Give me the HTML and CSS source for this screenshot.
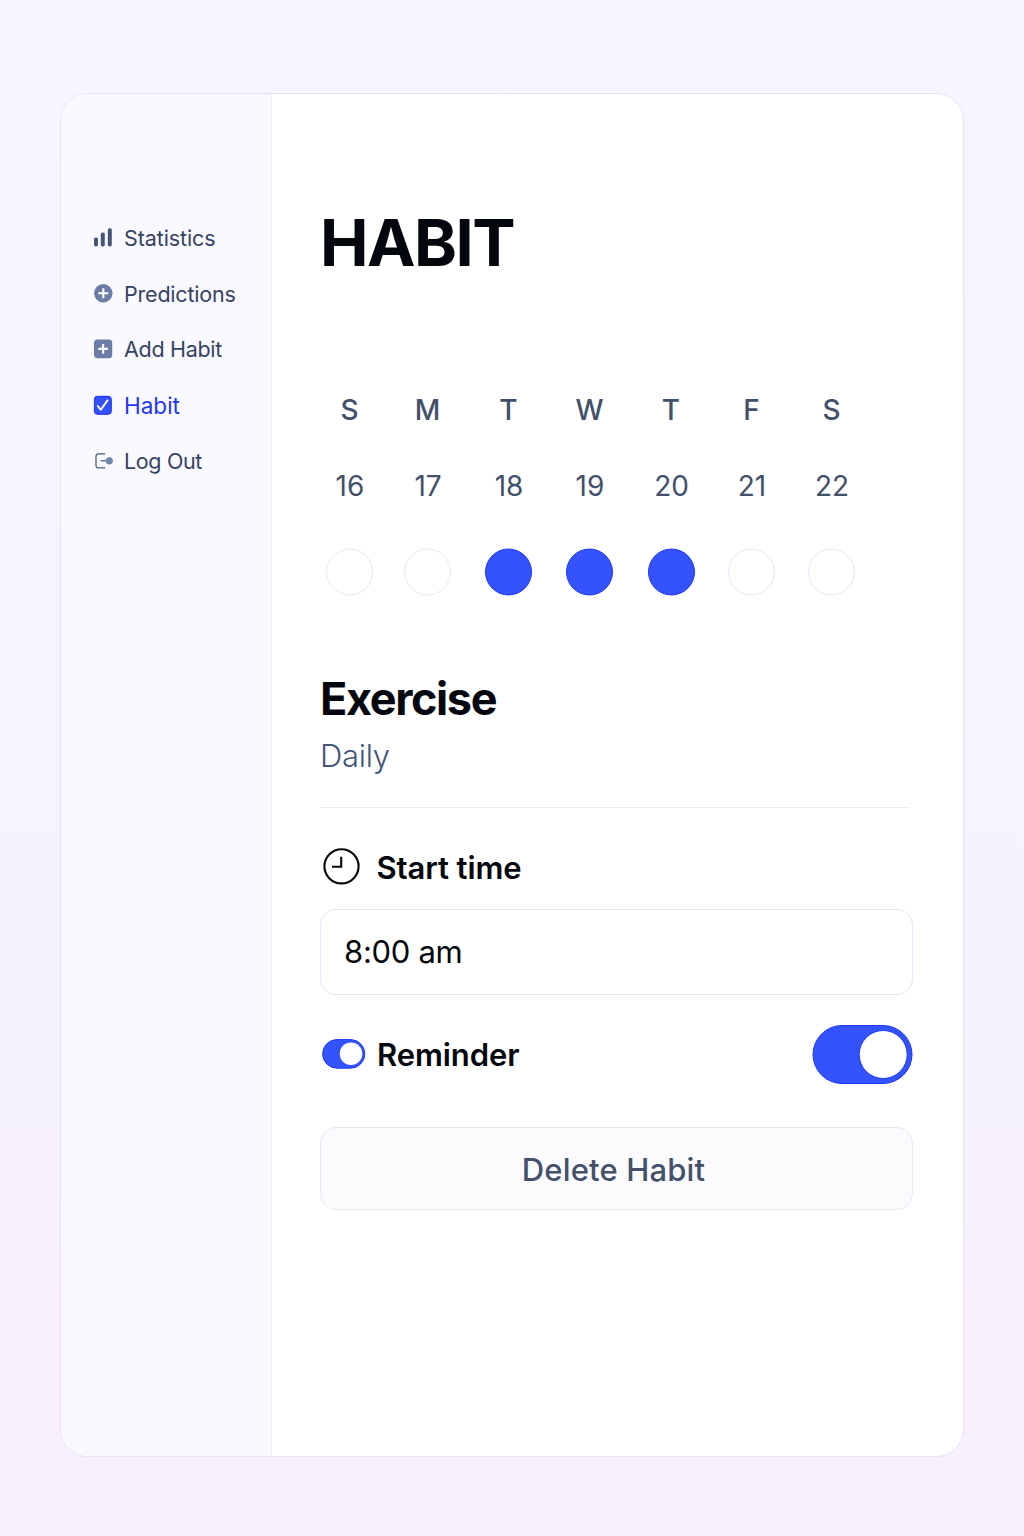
FILE: index.html
```html
<!DOCTYPE html>
<html lang="en">
<head>
<meta charset="utf-8">
<title>Habit</title>
<link rel="stylesheet" href="styles.css">
</head>
<body>
<div class="card">
  <nav class="sidebar">
    <a class="nav-item nav-statistics">
      <svg class="nav-icon" viewBox="0 0 20 20"><g fill="#465476"><rect x="1" y="9.4" width="4" height="9" rx="1.6"/><rect x="7.8" y="4.4" width="4" height="14" rx="1.6"/><rect x="14.8" y="0.2" width="4" height="18.2" rx="1.6"/></g></svg>
      <span>Statistics</span>
    </a>
    <a class="nav-item nav-predictions">
      <svg class="nav-icon" viewBox="0 0 20 20"><circle cx="10.3" cy="9.3" r="9.2" fill="#6b7ca6"/><path d="M10.3 4.3v10M5.3 9.3h10" stroke="#fff" stroke-width="2.1"/></svg>
      <span>Predictions</span>
    </a>
    <a class="nav-item nav-add">
      <svg class="nav-icon" viewBox="0 0 20 20"><rect x="1" y="0.5" width="18.2" height="18.8" rx="3.5" fill="#6b7ca6"/><path d="M10.1 5.1v9.6M5.3 9.9h9.6" stroke="#fff" stroke-width="2.1"/></svg>
      <span>Add Habit</span>
    </a>
    <a class="nav-item nav-habit active">
      <svg class="nav-icon" viewBox="0 0 20 20"><rect x="1.4" y="1.3" width="16.9" height="18" rx="3" fill="#3350fc" stroke="#1a2ff0"/><path d="M4.8 11l3 3.8 6.7-9.4" fill="none" stroke="#fff" stroke-width="1.9" stroke-linecap="round" stroke-linejoin="round"/></svg>
      <span>Habit</span>
    </a>
    <a class="nav-item nav-logout">
      <svg class="nav-icon" viewBox="0 0 20 20"><path d="M12.2 2.8H5.4Q3 2.8 3 5.2v9.2Q3 16.8 5.4 16.8h6.8" fill="none" stroke="#4f5f80" stroke-width="1.3"/><path d="M7.6 9.8h7" stroke="#4f5f80" stroke-width="1.3"/><circle cx="16.3" cy="9.8" r="3.6" fill="#7088ab"/></svg>
      <span>Log Out</span>
    </a>
  </nav>
  <main class="content">
    <h1 class="title">HABIT</h1>
    <section class="week">
      <span class="day">S</span><span class="day">M</span><span class="day">T</span><span class="day">W</span><span class="day">T</span><span class="day">F</span><span class="day">S</span>
      <span class="date">16</span><span class="date">17</span><span class="date">18</span><span class="date">19</span><span class="date">20</span><span class="date">21</span><span class="date">22</span>
      <svg class="dot" viewBox="0 0 48 48"><circle cx="23.5" cy="24" r="23"/></svg>
      <svg class="dot" viewBox="0 0 48 48"><circle cx="23.5" cy="24" r="23"/></svg>
      <svg class="dot done" viewBox="0 0 48 48"><circle cx="23.5" cy="24" r="23"/></svg>
      <svg class="dot done" viewBox="0 0 48 48"><circle cx="23.5" cy="24" r="23"/></svg>
      <svg class="dot done" viewBox="0 0 48 48"><circle cx="23.5" cy="24" r="23"/></svg>
      <svg class="dot" viewBox="0 0 48 48"><circle cx="23.5" cy="24" r="23"/></svg>
      <svg class="dot" viewBox="0 0 48 48"><circle cx="23.5" cy="24" r="23"/></svg>
    </section>
    <h2 class="name">Exercise</h2>
    <p class="frequency">Daily</p>
    <div class="divider"></div>
    <div class="field-label">
      <svg class="clock" viewBox="0 0 38 38"><circle cx="19.5" cy="18.3" r="17.1" fill="none" stroke="#04070d" stroke-width="2.1"/><path d="M19.2 8.8v10H10" fill="none" stroke="#04070d" stroke-width="2.1"/></svg>
      <span class="start-label">Start time</span>
    </div>
    <div class="time-input">8:00 am</div>
    <div class="reminder">
      <svg class="mini-toggle" viewBox="0 0 44 30"><rect x="0.6" y="0.6" width="42.2" height="28.6" rx="14.3" fill="#3452fd" stroke="#1f38f6"/><circle cx="29" cy="14.8" r="11.3" fill="#fff"/></svg>
      <span class="reminder-label">Reminder</span>
      <svg class="toggle" viewBox="0 0 101 60"><rect x="1" y="1.5" width="99" height="58" rx="29" fill="#3452fd" stroke="#1f38f6"/><circle cx="71.2" cy="30.5" r="24" fill="#fff" stroke="#1f38f6"/></svg>
    </div>
    <button class="delete">Delete Habit</button>
  </main>
</div>
</body>
</html>
```

FILE: styles.css
```css
* { box-sizing: border-box; }
body {
  margin: 0;
  height: 1536px;
  padding: 93px 60px 79px;
  font-family: Inter, "Liberation Sans", sans-serif;
  color: #04070d;
  background: linear-gradient(180deg, #f7f5ff 0%, #f5f3ff 65%, #f8f0fc 88%, #f7effb 100%);
}
.card {
  display: flex;
  height: 1364px;
  border: 1px solid #e6e2f4;
  border-radius: 28px;
  background: #fff;
  overflow: hidden;
}
.sidebar {
  display: flex;
  flex-direction: column;
  width: 211px;
  padding: 116px 0 0 32px;
  border-right: 1px solid #eeecfa;
  background: #faf9ff;
}
.nav-item {
  display: flex;
  align-items: center;
  gap: 11px;
  height: 55.8px;
  font-size: 21.5px;
  white-space: nowrap;
  color: #36435f;
}
.nav-icon { width: 20px; height: 20px; flex: none; }
.nav-statistics { letter-spacing: -0.1px; }
.nav-predictions { letter-spacing: -0.2px; }
.nav-add { letter-spacing: -0.3px; }
.nav-logout { letter-spacing: -0.35px; }
.active { font-size: 22.5px; color: #2437f2; }
.content { flex: 1; padding: 109px 50px 0 48px; }
.title, .name, .frequency { margin: 0; }
.title {
  height: 80px;
  font-size: 65px;
  line-height: 80px;
  font-weight: 700;
  letter-spacing: -1.5px;
}
.week {
  display: grid;
  grid-template-columns: 78px 81px 81px 81.5px 80.5px 80px 48px;
  grid-template-rows: 76px 76px 96px;
  align-items: center;
  margin: 89px 0 0 6px;
}
.day, .date { width: 47px; text-align: center; font-size: 28px; color: #435069; }
.day { font-weight: 500; }
.date { width: 48px; }
.dot {
  width: 48px;
  height: 48px;
  fill: #fff;
  stroke: #e9e7f9;
}
.dot.done { fill: #3452fd; stroke: #1f38f6; }
.name {
  margin-top: 49px;
  height: 60px;
  font-size: 45px;
  line-height: 60px;
  font-weight: 700;
  letter-spacing: -1.4px;
}
.frequency {
  margin-top: 7px;
  height: 40px;
  font-size: 31px;
  line-height: 40px;
  font-weight: 300;
  letter-spacing: -0.3px;
  color: #435578;
}
.divider { width: 590px; height: 1px; margin-top: 31px; background: #ebeaf4; }
.field-label {
  display: flex;
  align-items: center;
  height: 40px;
  margin-top: 39px;
  padding-left: 2px;
  gap: 16.5px;
  font-size: 31px;
  font-weight: 600;
}
.start-label, .reminder-label { letter-spacing: -0.1px; }
.clock { width: 38px; height: 38px; }
.time-input {
  display: flex;
  align-items: center;
  height: 86px;
  width: 593px;
  margin-top: 22px;
  padding: 0 0 2px 23px;
  border: 1px solid #e8e7f9;
  border-radius: 16px;
  font-size: 31px;
  letter-spacing: -0.3px;
}
.reminder {
  display: flex;
  align-items: center;
  width: 593px;
  height: 60px;
  margin-top: 29px;
  padding-left: 2px;
  font-size: 31px;
  font-weight: 600;
}
.mini-toggle { width: 44px; height: 30px; margin-right: 11px; }
.toggle { width: 101px; height: 60px; margin-left: auto; }
.delete {
  display: block;
  width: 593px;
  height: 83px;
  margin-top: 43px;
  padding: 1px 6px 0 0;
  border: 1px solid #e8e7f5;
  border-radius: 16px;
  background: #fbfbfd;
  font: 500 31px Inter, "Liberation Sans", sans-serif;
  letter-spacing: 0.15px;
  color: #44516b;
}
```
